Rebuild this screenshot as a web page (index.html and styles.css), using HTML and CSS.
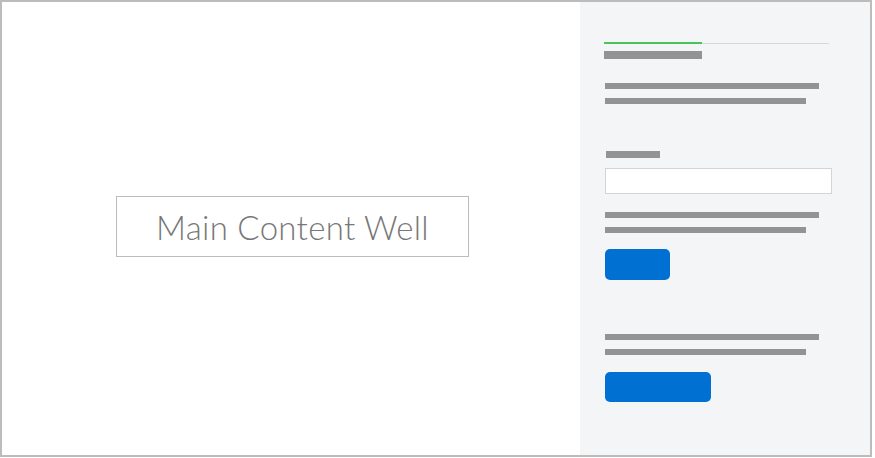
FILE: index.html
```html
<!DOCTYPE html>
<html lang="en">
<head>
    <meta charset="UTF-8">
    <meta name="viewport" content="width=device-width, initial-scale=1.0">
    <title>Main Content Well</title>
    <link rel="stylesheet" href="styles.css">
</head>
<body>
    <div class="frame">
        <div class="main">
            <div class="well">Main Content Well</div>
        </div>

        <div class="sidebar">
            <div class="tabs">
                <div class="tab-active"></div>
                <div class="tab-rest"></div>
            </div>
            <div class="bar title"></div>

            <div class="line long first"></div>
            <div class="line short"></div>

            <div class="bar label"></div>
            <div class="input"></div>

            <div class="line long after-input"></div>
            <div class="line short"></div>
            <div class="btn small"></div>

            <div class="line long section"></div>
            <div class="line short"></div>
            <div class="btn wide"></div>
        </div>
    </div>
</body>
</html>
```

FILE: styles.css
```css
body {
    margin: 0;
    background: #fff;
    font-family: Lato, "Open Sans", sans-serif;
}
.frame {
    display: flex;
    width: 868px;
    height: 453px;
    border: 2px solid #bcbcbc;
}
.main {
    flex: 1;
    display: flex;
    align-items: center;
    justify-content: center;
    background: #fff;
}
.well {
    width: 351px;
    height: 59px;
    border: 1px solid #bdbdbd;
    display: flex;
    align-items: center;
    justify-content: center;
    font-weight: 300;
    font-size: 33px;
    letter-spacing: 0.3px;
    color: #777;
    margin: -4px 0 0 3px;
}
.sidebar {
    width: 266px;
    padding: 40px 0 0 24px;
    background: #f4f5f7;
    display: flex;
    flex-direction: column;
    align-items: flex-start;
}
.tabs {
    display: flex;
    align-items: center;
    width: 225px;
    height: 2px;
}
.tab-active {
    width: 98px;
    height: 2px;
    background: #4cc25c;
}
.tab-rest {
    flex: 1;
    height: 1px;
    background: #d8d8d8;
}
.bar {
    background: #939393;
}
.title {
    width: 98px;
    height: 8px;
    margin-top: 7px;
}
.line {
    height: 6px;
    background: #939393;
    margin-left: 1px;
}
.long {
    width: 214px;
}
.short {
    width: 201px;
    margin-top: 9px;
}
.first {
    margin-top: 24px;
}
.label {
    width: 54px;
    height: 7px;
    margin: 47px 0 0 2px;
}
.input {
    width: 225px;
    height: 24px;
    margin: 10px 0 0 1px;
    background: #fff;
    border: 1px solid #d4d4d4;
}
.after-input {
    margin-top: 18px;
}
.btn {
    background: #0070d2;
    border-radius: 5px;
    margin-left: 1px;
}
.small {
    width: 65px;
    height: 31px;
    margin-top: 16px;
}
.section {
    margin-top: 54px;
}
.wide {
    width: 106px;
    height: 30px;
    margin-top: 17px;
}
```
